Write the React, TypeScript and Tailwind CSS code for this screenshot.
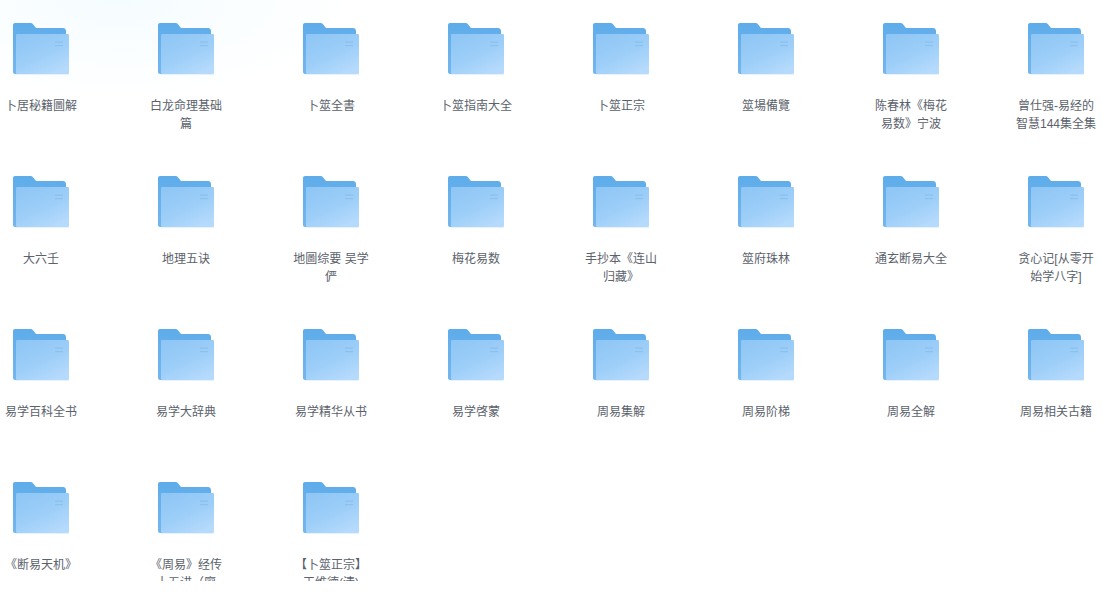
const folders = [
  "卜居秘籍圖解",
  "白龙命理基础篇",
  "卜筮全書",
  "卜筮指南大全",
  "卜筮正宗",
  "筮場備覽",
  "陈春林《梅花易数》宁波",
  "曾仕强-易经的智慧144集全集",
  "大六壬",
  "地理五诀",
  "地圖综要 吴学俨",
  "梅花易数",
  "手抄本《连山归藏》",
  "筮府珠林",
  "通玄断易大全",
  "贪心记[从零开始学八字]",
  "易学百科全书",
  "易学大辞典",
  "易学精华从书",
  "易学啓蒙",
  "周易集解",
  "周易阶梯",
  "周易全解",
  "周易相关古籍",
  "《断易天机》",
  "《周易》经传十五讲（廖\n名春）",
  "【卜筮正宗】王维德(清)",
];

function FolderIcon({ id }: { id: number }) {
  return (
    <svg width="56" height="52" viewBox="0 0 56 52" className="block shrink-0 -mb-px">
      <defs>
        <linearGradient id={`back-${id}`} x1="0" y1="0" x2="0" y2="1">
          <stop offset="0" stopColor="#5eacea" />
          <stop offset="1" stopColor="#74b6ee" />
        </linearGradient>
        <linearGradient id={`front-${id}`} x1="0.1" y1="0" x2="0.7" y2="1">
          <stop offset="0" stopColor="#8fc6f5" />
          <stop offset="0.55" stopColor="#9ccef8" />
          <stop offset="1" stopColor="#b5dafc" />
        </linearGradient>
      </defs>
      {/* back panel with tab */}
      <path
        d="M2 0H17.5C18.6 0 19.4 .4 20 1.2L23 5H50C51.7 5 53 6.3 53 8V51H2C.9 51 0 50 0 49V2C0 .9 .9 0 2 0Z"
        fill={`url(#back-${id})`}
      />
      {/* front panel */}
      <rect x="3" y="11" width="53" height="40" rx="1.2" fill={`url(#front-${id})`} />
      <rect x="3" y="51" width="53" height="1" fill="#e6f2fe" />
      <rect x="42" y="18.5" width="8" height="1.2" fill="#8cc0ed" />
      <rect x="42" y="22" width="8" height="1.2" fill="#8cc0ed" />
    </svg>
  );
}

export default function App() {
  return (
    <div className="h-[604px] w-[1111px] overflow-hidden bg-[radial-gradient(ellipse_240px_100px_at_120px_0px,#f5fcff,#ffffff)]">
      <div className="h-[581px] overflow-hidden pt-[23px]">
        <div className="grid grid-cols-[repeat(8,82px)] auto-rows-[153px] gap-x-[63px]">
          {folders.map((name, index) => (
            <div key={index} className="flex flex-col items-center">
              <FolderIcon id={index} />
              <p className="mt-[23px] w-[82px] whitespace-pre-line break-all text-center text-xs leading-[18px] text-[#5b626c] [font-family:'Liberation_Sans','Noto_Sans_CJK_SC',sans-serif]">
                {name}
              </p>
            </div>
          ))}
        </div>
      </div>
    </div>
  );
}
